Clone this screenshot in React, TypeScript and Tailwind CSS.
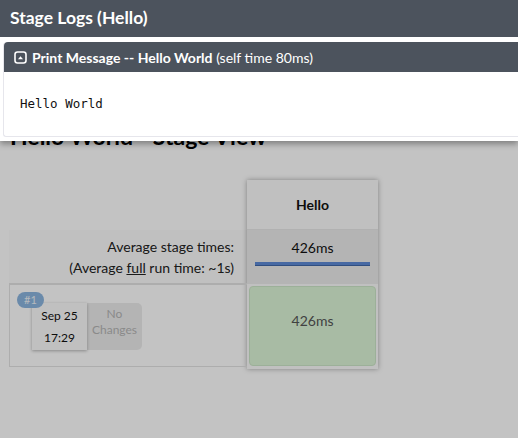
import React from 'react'

function ToggleIcon() {
  return (
    <svg width="13" height="13" viewBox="0 0 13 13" className="shrink-0">
      <rect x="1" y="1" width="11" height="11" rx="2.5" fill="none" stroke="white" strokeWidth="1.6" />
      <path d="M4 8.2 L6.5 5.2 L9 8.2 Z" fill="white" />
    </svg>
  )
}

function StageView() {
  return (
    <div className="bg-white h-full">
      <h1 className="pt-[122px] pl-[10px] text-[23px] font-bold text-black leading-[29px]">
        Hello World - Stage View
      </h1>
      <div className="flex mt-[29px] ml-[9px]">
        <div className="w-[238px] flex flex-col">
          <div className="h-[50px]" />
          <div className="h-[53px] bg-[#fcfcfc] flex flex-col items-end justify-center pr-[13px] text-[14px] leading-[21px] text-[#222]">
            <span>Average stage times:</span>
            <span>
              (Average <span className="underline">full</span> run time: ~1s)
            </span>
          </div>
          <div className="h-[84px] border-t-2 border-l border-b border-[#e2e2e2] relative">
            <span className="absolute left-[7px] top-[7px] z-10 rounded-full bg-[#8bb5df] px-[7px] text-[11px] leading-[16px] text-[#eef3f8]">
              #1
            </span>
            <div className="flex ml-[22px] mt-[18px]">
              <div className="w-[55px] h-[47px] bg-[#fbfbfb] shadow-[0_1px_3px_rgba(0,0,0,0.3)] flex flex-col items-center justify-center gap-[4px] text-[12px] leading-[18px] text-[#111] relative">
                <span>Sep 25</span>
                <span>17:29</span>
              </div>
              <div className="w-[55px] h-[47px] bg-[#ececec] rounded-r-[5px] flex flex-col items-center pt-[3px] text-[12px] leading-[16px] text-[#b5b5b5]">
                <span>No</span>
                <span>Changes</span>
              </div>
            </div>
          </div>
        </div>
        <div className="w-[131px] flex flex-col shadow-[0_0_5px_rgba(0,0,0,0.35)]">
          <div className="h-[50px] bg-[#fbfbfb] flex items-center justify-center text-[14px] font-bold text-[#111] border-b border-[#e8e8e8]">
            Hello
          </div>
          <div className="h-[54px] bg-[#ececec] flex flex-col items-center pt-[9px] text-[14px] leading-[18px] text-[#111]">
            <span>426ms</span>
            <div className="mt-[5px] w-[115px] h-[4px] bg-[#5d8ad5] border-b border-[#3f66a8]" />
          </div>
          <div className="h-[85px] bg-[#fbfbfb] p-[2px] pb-[3px]">
            <div className="h-full rounded-[4px] bg-[#dcf5d7] border border-[#cde6c8] flex justify-center pt-[25px] text-[14px] leading-[18px] text-[#555]">
              426ms
            </div>
          </div>
        </div>
      </div>
    </div>
  )
}

export default function App() {
  return (
    <div className="relative w-[518px] h-[438px] overflow-hidden font-['Lato','Noto_Sans',sans-serif]">
      <StageView />
      <div className="absolute inset-0 z-20 bg-black/[0.235]" />
      <div className="absolute top-0 left-0 right-0 z-30 shadow-[0_3px_6px_rgba(0,0,0,0.35)]">
        <div className="h-[37px] bg-[#4c535d] flex items-center pl-[10px] text-[17.5px] font-bold text-white">
          Stage Logs (Hello)
        </div>
        <div className="bg-white pt-[5px] pb-[4px] pl-[3px]">
          <div className="border-l border-b border-[#e6e6ec] rounded-tl-[4px] rounded-bl-[3px]">
            <div className="h-[30px] bg-[#4c535d] rounded-tl-[4px] flex items-center gap-[5px] pl-[10px] text-[14px] text-white">
              <ToggleIcon />
              <span>
                <span className="font-bold">Print Message -- Hello World</span> (self time 80ms)
              </span>
            </div>
            <div className="h-[64px] flex items-center pl-[16px] font-['DejaVu_Sans_Mono',monospace] text-[12.5px] text-[#111]">
              Hello World
            </div>
          </div>
        </div>
      </div>
    </div>
  )
}
